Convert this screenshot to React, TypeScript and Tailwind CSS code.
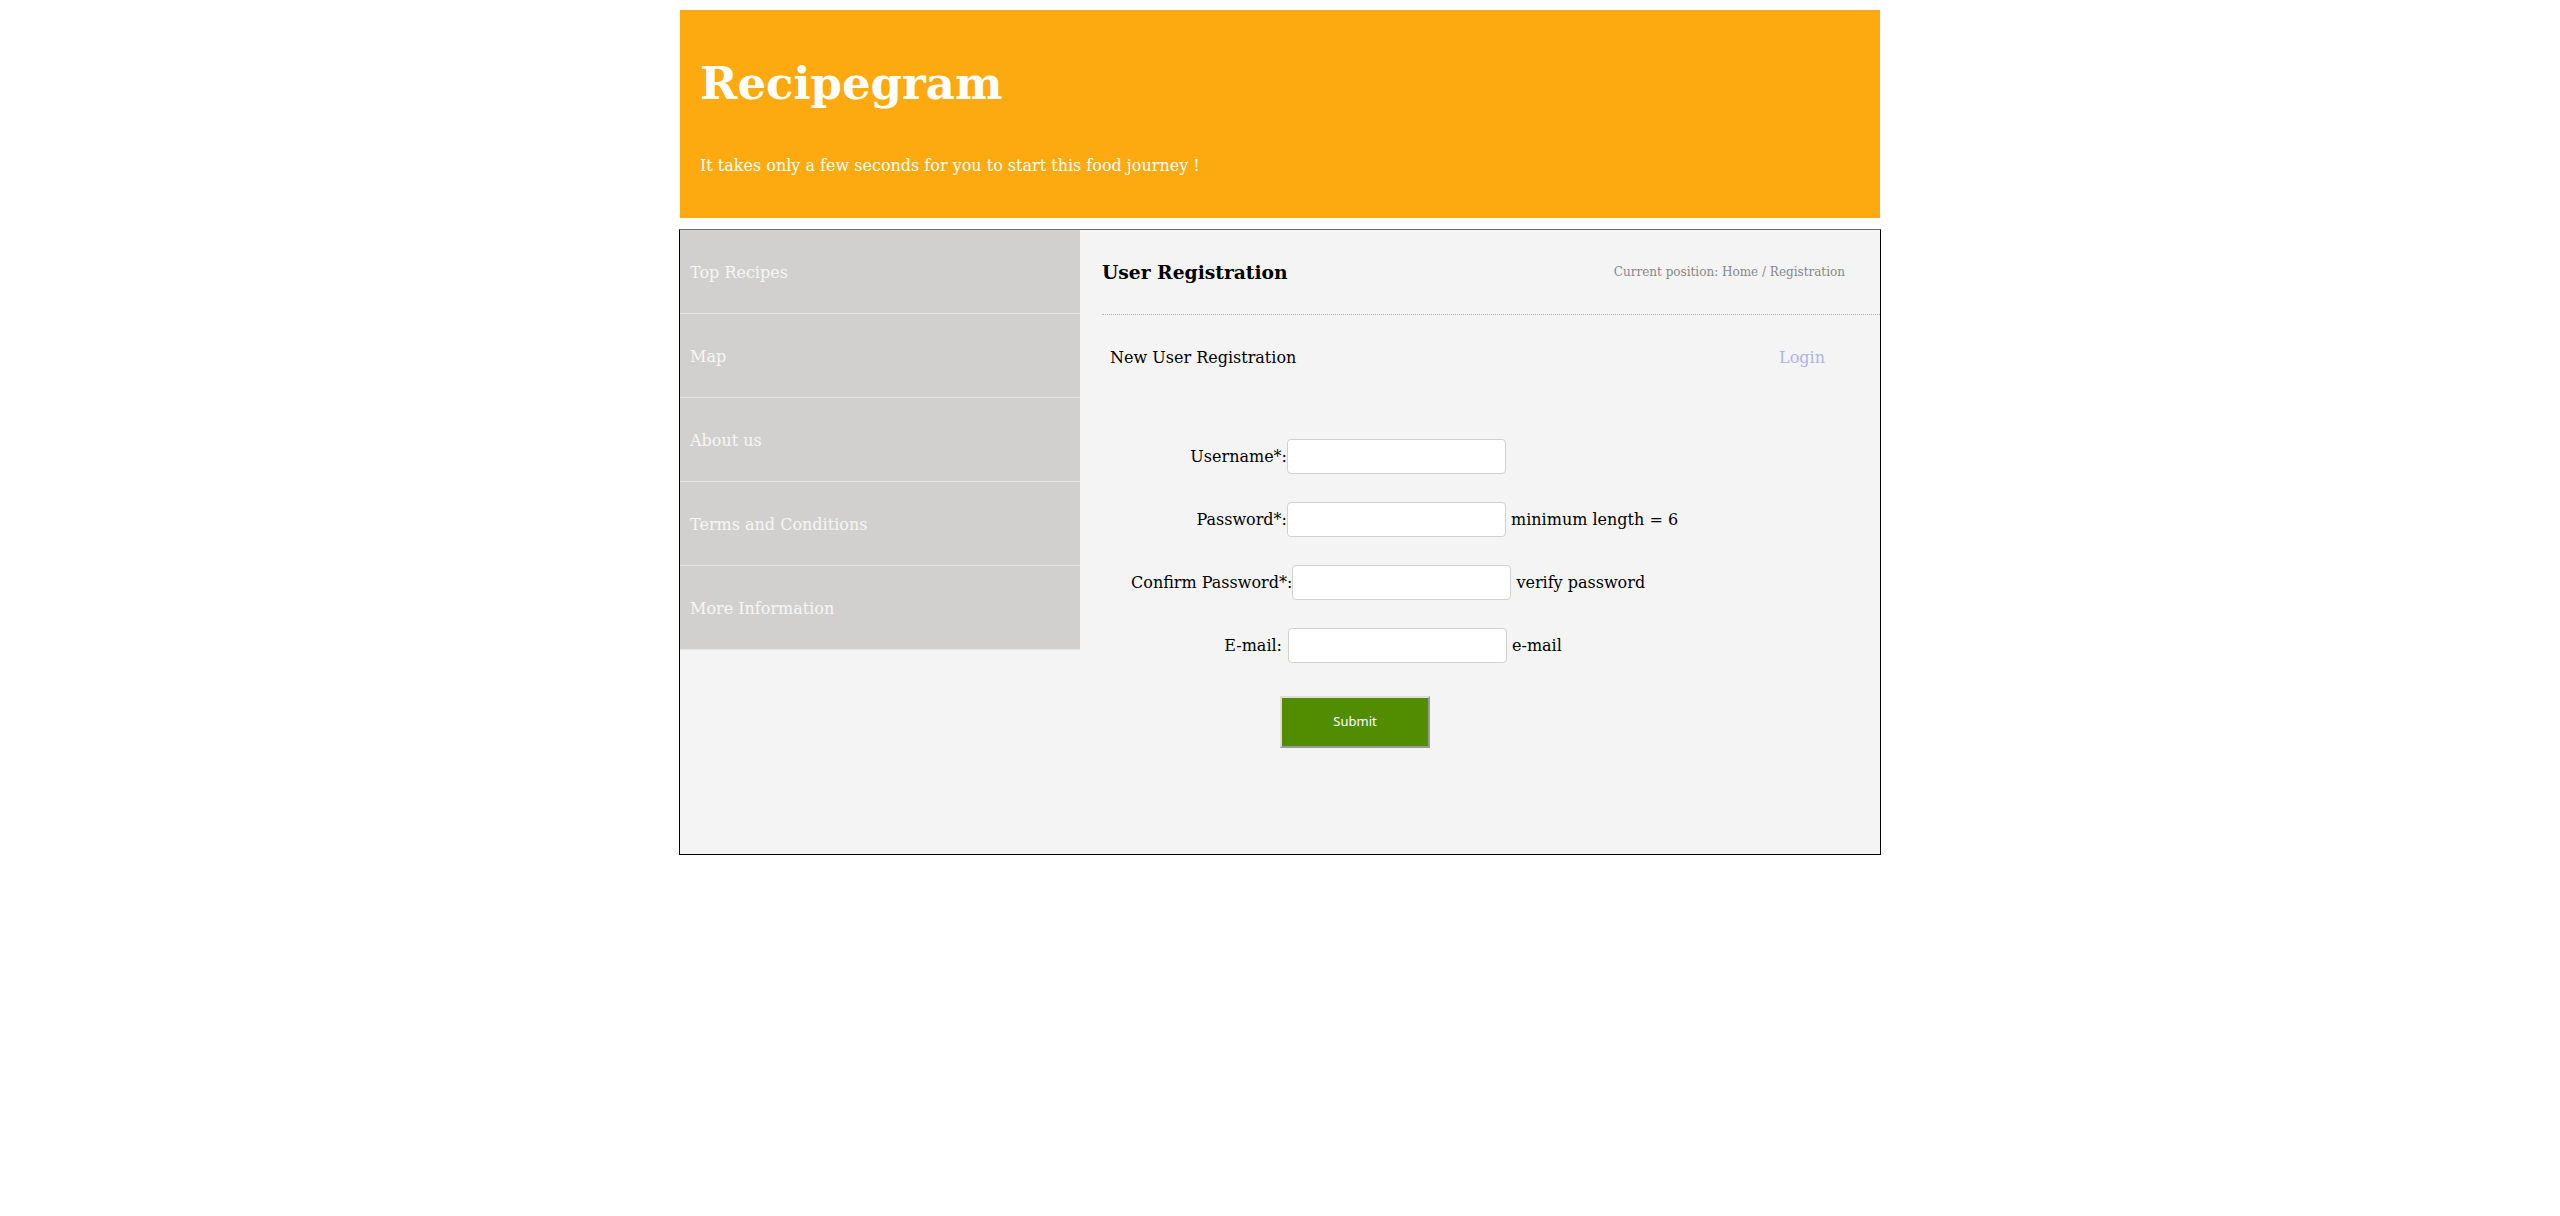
import React from 'react';

const navItems = ['Top Recipes', 'Map', 'About us', 'Terms and Conditions', 'More Information'];

interface FieldProps {
  label: string;
  hint?: string;
  type?: string;
  labelClass?: string;
}

const Field: React.FC<FieldProps> = ({ label, hint, type = 'text', labelClass = '' }) => (
  <div className="flex h-[35px] items-center">
    <label className={`min-w-[156px] whitespace-nowrap text-right text-[16px] text-black ${labelClass}`}>{label}</label>
    <input
      type={type}
      className="h-[35px] w-[219px] rounded-[4px] border border-[#d4d0cc] bg-white px-2 outline-none"
    />
    {hint && <span className="ml-[5px] whitespace-nowrap text-[16px] text-black">{hint}</span>}
  </div>
);

export default function App() {
  return (
    <div className="min-h-screen bg-white font-['DejaVu_Serif',serif]">
      {/* Banner */}
      <div className="mx-auto mt-[10px] h-[208px] w-[1200px] bg-[#fdaa10] px-[20px] pt-[48px] text-white">
        <h1 className="text-[45px] font-bold leading-[52px]">Recipegram</h1>
        <p className="mt-[46px] text-[16px] leading-[19px]">
          It takes only a few seconds for you to start this food journey !
        </p>
      </div>

      {/* Main box */}
      <div className="mx-auto mt-[11px] flex h-[626px] w-[1202px] border border-black border-t-[#6b6b6b] bg-[#f4f4f4]">
        <nav className="w-[400px] shrink-0 self-start">
          {navItems.map((item) => (
            <a
              key={item}
              href="#"
              className="flex h-[84px] items-center border-b border-[#e8e6e4] bg-[#d2d0ce] pl-[10px] pt-[3px] text-[16px] text-[#f6f6f6]"
            >
              {item}
            </a>
          ))}
        </nav>

        <div className="flex-1">
          <div className="ml-[22px] flex h-[85px] items-center justify-between border-b border-dotted border-[#b0b0b0] pr-[35px]">
            <h3 className="text-[18.72px] font-bold text-black">User Registration</h3>
            <span className="text-[12px] text-[#888888]">Current position: Home / Registration</span>
          </div>

          <div className="flex h-[84px] items-center justify-between pl-[30px] pr-[55px] pt-[2px]">
            <span className="text-[16px] text-black">New User Registration</span>
            <a href="#" className="text-[16px] text-[#aeb2ee]">
              Login
            </a>
          </div>

          <form className="flex flex-col gap-[28px] pl-[51px] pt-[40px]">
            <Field label="Username*:" />
            <Field label="Password*:" type="password" hint="minimum length = 6" />
            <Field label="Confirm Password*:" type="password" hint="verify password" />
            <Field label="E-mail:" hint="e-mail" labelClass="min-w-[157px] pr-[6px]" />
          </form>

          <div className="ml-[200px] mt-[33px]">
            <button
              type="button"
              className="h-[52px] w-[150px] border-2 border-b-[#9a9a9a] border-l-[#dedede] border-r-[#9a9a9a] border-t-[#dedede] bg-[#528c00] font-['Noto_Sans',sans-serif] text-[13px] text-white"
            >
              Submit
            </button>
          </div>
        </div>
      </div>
    </div>
  );
}
